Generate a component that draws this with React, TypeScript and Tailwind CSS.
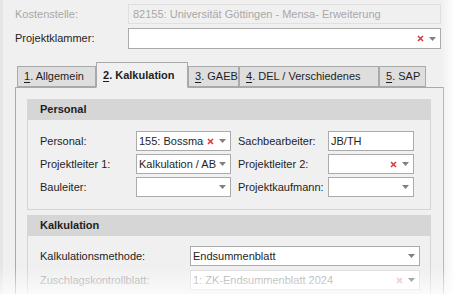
import React from 'react';

function Arrow() {
  return (
    <svg width="7" height="4" viewBox="0 0 7 4" className="shrink-0">
      <path d="M0 0h7L3.5 4z" fill="#808080" />
    </svg>
  );
}

function Clear({ faded }: { faded?: boolean }) {
  return (
    <svg width="7" height="7" viewBox="0 0 7 7" className="shrink-0">
      <path d="M1 1l5 5M6 1L1 6" stroke={faded ? '#e6b3b3' : '#d63a3a'} strokeWidth="1.6" />
    </svg>
  );
}

function Combo({
  text = '',
  clear,
  arrow = true,
  disabled,
  className = '',
}: {
  text?: string;
  clear?: boolean;
  arrow?: boolean;
  disabled?: boolean;
  className?: string;
}) {
  return (
    <div
      className={`flex h-[20px] items-center border bg-white pl-[2px] ${
        disabled ? 'border-[#dcdcdc] text-[#a8a8a8]' : 'border-[#ababab] text-[#1e1e1e]'
      } ${className}`}
    >
      <span className="flex-1 overflow-hidden whitespace-nowrap">{text}</span>
      {clear && (
        <span className="flex w-[12px] justify-center">
          <Clear faded={disabled} />
        </span>
      )}
      {arrow && (
        <span className="flex w-[14px] justify-center pr-[1px]">
          <Arrow />
        </span>
      )}
    </div>
  );
}

function Tab({ n, label, active, w }: { n: string; label: string; active?: boolean; w: string }) {
  return (
    <div
      className={`flex items-center border border-[#a9a9a9] pl-[6px] ${w} ${
        active
          ? 'z-10 -mb-px h-[26px] border-b-[#f0f0f0] bg-[#f0f0f0] font-bold'
          : 'h-[21px] bg-[#dedede]'
      }`}
    >
      <span className="underline underline-offset-2">{n}</span>
      <span>. {label}</span>
    </div>
  );
}

function GroupHeader({ title }: { title: string }) {
  return (
    <div className="flex h-[21px] items-center bg-[#d6d6d6] pl-[13px] font-bold text-[#1e1e1e]">
      {title}
    </div>
  );
}

export default function App() {
  return (
    <div className="relative h-[294px] w-[455px] overflow-hidden bg-[#f0f0f0] text-[11px] text-[#1e1e1e] [font-family:'Liberation_Sans',Arial,sans-serif]">
      <div className="h-full border-l-[3px] border-[#e6e6e6]">
        {/* Kopfzeilen */}
        <div className="flex items-center pl-[12px] pt-[4px]">
          <div className="w-[113px] text-[#a8a8a8]">Kostenstelle:</div>
          <div className="flex h-[20px] w-[313px] items-center border border-[#e0e0e0] pl-[4px] text-[#a8a8a8]">
            82155: Universität Göttingen - Mensa- Erweiterung
          </div>
        </div>
        <div className="flex items-center pl-[12px] pt-[4px]">
          <div className="w-[113px]">Projektklammer:</div>
          <Combo clear className="h-[21px] w-[313px]" />
        </div>

        {/* Tabs */}
        <div className="ml-[12px] mt-[13px] w-[429px]">
          <div className="flex items-end pl-[2px]">
            <Tab n="1" label="Allgemein" w="w-[79px]" />
            <Tab n="2" label="Kalkulation" active w="w-[92px]" />
            <Tab n="3" label="GAEB" w="w-[51px]" />
            <Tab n="4" label="DEL / Verschiedenes" w="w-[140px]" />
            <Tab n="5" label="SAP" w="w-[47px]" />
          </div>
          <div className="h-[220px] border border-[#a9a9a9] bg-[#f0f0f0] pl-[11px] pr-[12px] pt-[11px]">
            {/* Personal */}
            <div>
              <GroupHeader title="Personal" />
              <div className="flex flex-col gap-[3px] border border-t-0 border-[#d4d4d4] pb-[12px] pl-[12px] pt-[11px]">
                <div className="flex items-center">
                  <div className="w-[96px]">Personal:</div>
                  <Combo text="155: Bossmann" clear className="w-[95px]" />
                  <div className="w-[97px] pl-[7px]">Sachbearbeiter:</div>
                  <Combo text="JB/TH" arrow={false} className="w-[86px]" />
                </div>
                <div className="flex items-center">
                  <div className="w-[96px]">Projektleiter 1:</div>
                  <Combo text="Kalkulation / AB" className="w-[95px]" />
                  <div className="w-[97px] pl-[7px]">Projektleiter 2:</div>
                  <Combo clear className="w-[86px]" />
                </div>
                <div className="flex items-center">
                  <div className="w-[96px]">Bauleiter:</div>
                  <Combo className="w-[95px]" />
                  <div className="w-[97px] pl-[7px]">Projektkaufmann:</div>
                  <Combo className="w-[86px]" />
                </div>
              </div>
            </div>

            {/* Kalkulation */}
            <div className="mt-[5px]">
              <GroupHeader title="Kalkulation" />
              <div className="flex flex-col gap-[4px] border border-t-0 border-[#d4d4d4] pb-[12px] pl-[12px] pt-[10px]">
                <div className="flex items-center">
                  <div className="w-[150px]">Kalkulationsmethode:</div>
                  <Combo text="Endsummenblatt" className="w-[230px]" />
                </div>
                <div className="flex items-center">
                  <div className="w-[150px] text-[#a8a8a8]">Zuschlagskontrollblatt:</div>
                  <Combo text="1: ZK-Endsummenblatt 2024" clear disabled className="w-[230px]" />
                </div>
              </div>
            </div>
          </div>
        </div>
      </div>

      {/* ausgeblendeter Rand */}
      <div className="pointer-events-none absolute right-0 top-0 h-full w-[14px] bg-gradient-to-r from-transparent to-white" />
      <div className="pointer-events-none absolute bottom-0 left-0 h-[26px] w-full bg-gradient-to-b from-transparent to-white/70" />
    </div>
  );
}
